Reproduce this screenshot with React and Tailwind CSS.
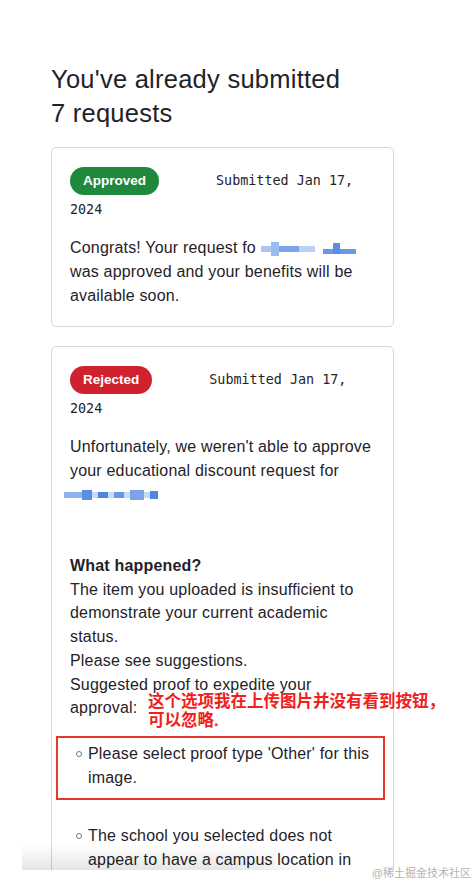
import React from 'react';

const Badge = ({ label, color }) => (
  <span className={`inline-block h-[28px] rounded-full px-[13px] align-middle text-[13.5px] font-semibold leading-[28px] text-white ${color}`}>
    {label}
  </span>
);

const Submitted = () => (
  <span className="ml-[57px] align-middle font-['DejaVu_Sans_Mono',monospace] text-[13.4px]">
    Submitted Jan 17, 2024
  </span>
);

export default function App() {
  return (
    <div className="relative h-[884px] overflow-hidden bg-white font-['Liberation_Sans','Noto_Sans_CJK_SC',sans-serif] text-[#1f2328]">
      <div className="relative h-[870px] overflow-hidden">
        <div className="w-[394px] pl-[51px] pt-[62px]">
          <h1 className="text-[25.5px] font-normal leading-[34px] tracking-[0.25px]">
            You've already submitted
            <br />7 requests
          </h1>

          {/* approved */}
          <div className="mt-[17px] rounded-[5px] border border-[#d0d7de] px-[18px] pb-[18px] pt-[18px] tracking-[0.18px]">
            <div className="h-[56px] leading-[28px] tracking-normal">
              <Badge label="Approved" color="bg-[#1f883d]" />
              <Submitted />
            </div>
            <p className="mt-[14px] text-[16px] leading-[24px]">
              Congrats! Your request fo{' '}
              <span className="inline-flex items-center gap-[8px] align-middle blur-[0.6px]">
                <span className="flex items-center">
                  <span className="h-[6px] w-[10px] bg-[#a9c7f2]" />
                  <span className="h-[14px] w-[8px] bg-[#9bbcf0]" />
                  <span className="h-[6px] w-[20px] bg-[#7ba3e8]" />
                  <span className="h-[6px] w-[16px] bg-[#b9d1f5]" />
                </span>
                <span className="flex items-end">
                  <span className="h-[5px] w-[10px] bg-[#6a98e4]" />
                  <span className="h-[11px] w-[7px] bg-[#5b8de2]" />
                  <span className="h-[5px] w-[16px] bg-[#6a98e4]" />
                </span>
              </span>{' '}
              was approved and your benefits will be available soon.
            </p>
          </div>

          {/* rejected */}
          <div className="relative mt-[19px] h-[600px] rounded-[5px] border border-[#d0d7de] px-[18px] pt-[18px] tracking-[0.18px]">
            <div className="h-[56px] leading-[28px] tracking-normal">
              <Badge label="Rejected" color="bg-[#cf222e]" />
              <Submitted />
            </div>
            <p className="mt-[14px] text-[16px] leading-[24px]">
              Unfortunately, we weren't able to approve your educational discount request for
            </p>
            <div className="-ml-[6px] flex h-[24px] items-center blur-[0.7px]">
              <span className="h-[6px] w-[18px] bg-[#8fb2ee]" />
              <span className="h-[10px] w-[10px] bg-[#5b8de2]" />
              <span className="h-[6px] w-[6px] bg-[#c9dcf7]" />
              <span className="h-[6px] w-[10px] bg-[#4f84e0]" />
              <span className="h-[6px] w-[6px] bg-[#c9dcf7]" />
              <span className="h-[6px] w-[10px] bg-[#6a98e4]" />
              <span className="h-[6px] w-[6px] bg-[#c9dcf7]" />
              <span className="h-[10px] w-[14px] bg-[#7ba3e8]" />
              <span className="h-[6px] w-[6px] bg-[#c9dcf7]" />
              <span className="h-[8px] w-[8px] bg-[#4f84e0]" />
            </div>

            <div className="mt-[47px] text-[16px] leading-[23.7px]">
              <p className="font-bold">What happened?</p>
              <p>The item you uploaded is insufficient to demonstrate your current academic status.</p>
              <p>Please see suggestions.</p>
              <p className="relative">
                Suggested proof to expedite your approval:
                <span className="absolute left-[78px] top-[19px] whitespace-nowrap text-[16.5px] font-semibold leading-[19px] tracking-normal text-[#f0201c]">
                  这个选项我在上传图片并没有看到按钮，
                  <br />
                  可以忽略.
                </span>
              </p>
            </div>

            <ul className="mt-[16px] text-[16px] leading-[24px]">
              <li className="-ml-[14px] flex w-[329px] border-2 border-[#e8372f] pb-[8px] pl-[18px] pt-[4px]">
                <span className="mr-[6px] mt-[9px] h-[6px] w-[6px] shrink-0 rounded-full border border-[#6e7781]" />
                <span>Please select proof type 'Other' for this image.</span>
              </li>
              <li className="mt-[24px] flex pl-[6px]">
                <span className="mr-[6px] mt-[9px] h-[6px] w-[6px] shrink-0 rounded-full border border-[#6e7781]" />
                <span>The school you selected does not appear to have a campus location in your country.</span>
              </li>
            </ul>
          </div>
        </div>

        {/* screenshot shading */}
        <div className="absolute left-[22px] top-[844px] h-[26px] w-[290px] bg-gradient-to-b from-black/0 to-black/10 [mask-image:linear-gradient(to_right,black_75%,transparent)]" />
      </div>

      <div className="absolute bottom-[4px] right-[3px] text-[11px] leading-[14px] text-[#b4b4b4]">@稀土掘金技术社区</div>
    </div>
  );
}
